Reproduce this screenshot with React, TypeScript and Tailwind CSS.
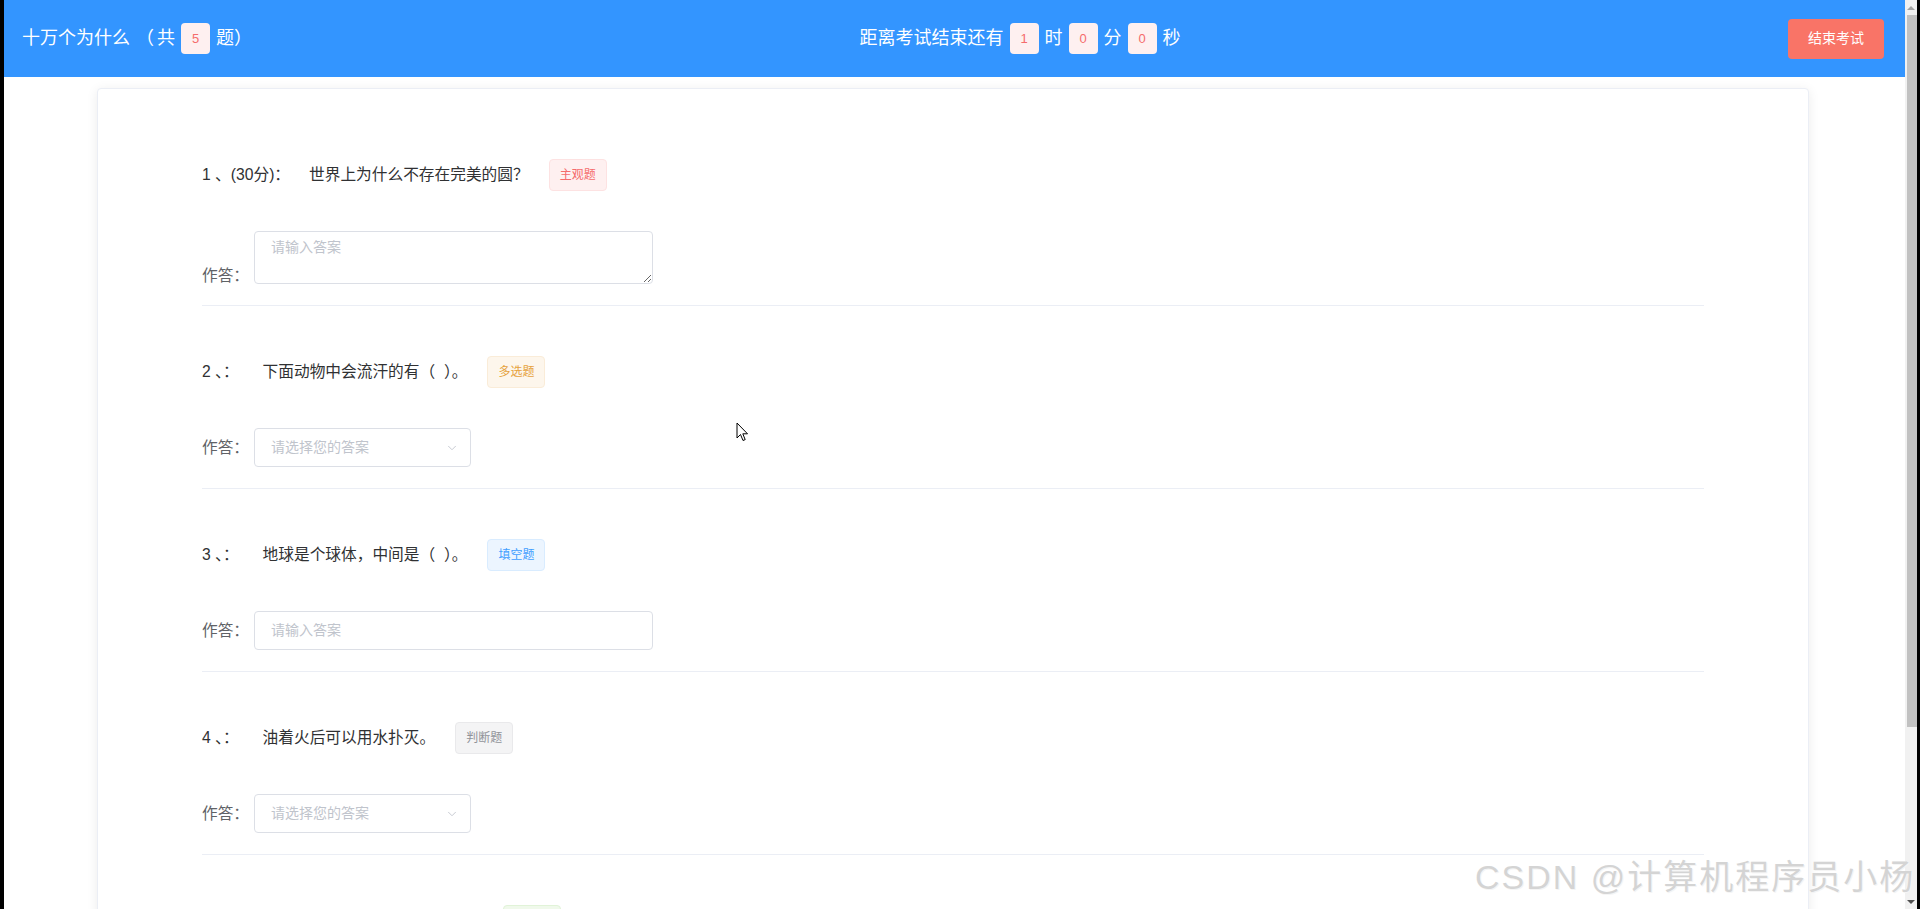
import React from "react";
import { ChevronDown } from "lucide-react";

type TagKind = "danger" | "warning" | "primary" | "info" | "success";

const tagClass: Record<TagKind, string> = {
  danger: "bg-[#fef0f0] border-[#fde2e2] text-[#f56c6c]",
  warning: "bg-[#fdf6ec] border-[#faecd8] text-[#e6a23c]",
  primary: "bg-[#ecf5ff] border-[#d9ecff] text-[#409eff]",
  info: "bg-[#f4f4f5] border-[#e9e9eb] text-[#909399]",
  success: "bg-[#f0f9eb] border-[#e1f3d8] text-[#67c23a]",
};

type Q = {
  no: string;
  text: string;
  tag: string;
  kind: TagKind;
  answer: "textarea" | "select" | "input";
  textGap: string;
};

const questions: Q[] = [
  { no: "1 、(30分)：", text: "世界上为什么不存在完美的圆？", tag: "主观题", kind: "danger", answer: "textarea", textGap: "ml-[19px]" },
  { no: "2 、：", text: "下面动物中会流汗的有（\u00a0\u00a0）。", tag: "多选题", kind: "warning", answer: "select", textGap: "ml-[24px]" },
  { no: "3 、：", text: "地球是个球体，中间是（\u00a0\u00a0）。", tag: "填空题", kind: "primary", answer: "input", textGap: "ml-[24px]" },
  { no: "4 、：", text: "油着火后可以用水扑灭。", tag: "判断题", kind: "info", answer: "select", textGap: "ml-[24px]" },
  { no: "5 、：", text: "一年中白天最长的一天是（\u00a0\u00a0）。", tag: "单选题", kind: "success", answer: "select", textGap: "ml-[24px]" },
];

function Badge({ children }: { children: React.ReactNode }) {
  return (
    <span className="mx-[6px] inline-flex h-[31px] w-[29px] items-center justify-center rounded-[4px] bg-[#fef0f0] text-[13px] text-[#f56c6c]">
      {children}
    </span>
  );
}

function Answer({ kind }: { kind: Q["answer"] }) {
  if (kind === "textarea") {
    return (
      <textarea
        placeholder="请输入答案"
        className="h-[53px] w-[399px] rounded-[4px] border border-[#dcdfe6] bg-white px-[16px] py-[5px] text-[14px] leading-[20px] text-[#606266] outline-none placeholder:text-[#c0c4cc]"
      />
    );
  }
  if (kind === "input") {
    return (
      <div className="flex h-[39px] w-[399px] items-center rounded-[4px] border border-[#dcdfe6] bg-white px-[16px] text-[14px] text-[#c0c4cc]">
        请输入答案
      </div>
    );
  }
  return (
    <div className="flex h-[39px] w-[217px] items-center justify-between rounded-[4px] border border-[#dcdfe6] bg-white pl-[16px] pr-[11px] text-[14px] text-[#c0c4cc]">
      <span>请选择您的答案</span>
      <ChevronDown size={14} strokeWidth={1.5} className="text-[#c0c4cc]" />
    </div>
  );
}

function Question({ q, first }: { q: Q; first: boolean }) {
  return (
    <div className={`${first ? "" : "pt-[50px]"} border-b border-[#ebeef5] pb-[21px]`}>
      <div className="flex h-[32px] items-center whitespace-nowrap text-[15.7px] text-[#303133]">
        <span>{q.no}</span>
        <span className={q.textGap}>{q.text}</span>
        <span
          className={`ml-[20px] inline-flex h-[32px] items-center rounded-[4px] border px-[10px] text-[12px] ${tagClass[q.kind]}`}
        >
          {q.tag}
        </span>
      </div>
      <div className={`mt-[40px] flex ${q.answer === "textarea" ? "items-end" : "items-center"}`}>
        <span
          className={`w-[52px] text-[15.7px] text-[#606266] ${q.answer === "textarea" ? "leading-[16px]" : ""}`}
        >
          作答：
        </span>
        <Answer kind={q.answer} />
      </div>
    </div>
  );
}

export default function App() {
  return (
    <div className="relative flex h-[909px] w-full overflow-hidden bg-white font-['Liberation_Sans','Noto_Sans_CJK_SC',sans-serif]">
      <div className="w-[4px] shrink-0 bg-black" />
      <div className="flex min-w-0 flex-1 flex-col">
        <header className="flex h-[77px] shrink-0 items-center justify-between bg-[#3395ff] pl-[18px] pr-[21px] text-white">
          <div className="flex items-center text-[18px]">
            <span>十万个为什么</span>
            <span className="ml-[6px]">（</span>
            <span className="ml-[3px]">共</span>
            <Badge>5</Badge>
            <span>题）</span>
          </div>
          <div className="flex items-center text-[18px]">
            <span>距离考试结束还有</span>
            <Badge>1</Badge>
            <span>时</span>
            <Badge>0</Badge>
            <span>分</span>
            <Badge>0</Badge>
            <span>秒</span>
          </div>
          <button className="h-[40px] w-[96px] rounded-[4px] bg-[#f97467] text-[14px] text-white">
            结束考试
          </button>
        </header>
        <div className="ml-[93px] mt-[11px] w-[1712px] flex-1 rounded-[4px] border border-[#ebeef5] bg-white px-[104px] pt-[70px] shadow-[0_2px_12px_0_rgba(0,0,0,0.08)]">
          {questions.map((q, i) => (
            <Question key={i} q={q} first={i === 0} />
          ))}
        </div>
      </div>
      <div className="flex w-[12px] shrink-0 flex-col bg-[#f1f1f1]">
        <div className="flex h-[15px] items-center justify-center">
          <div className="h-0 w-0 border-x-[4px] border-b-[4px] border-x-transparent border-b-[#a3a3a3]" />
        </div>
        <div className="ml-[2px] h-[712px] w-[10px] bg-[#c1c1c1]" />
        <div className="flex-1" />
        <div className="flex h-[15px] items-center justify-center">
          <div className="h-0 w-0 border-x-[4px] border-t-[4px] border-x-transparent border-t-[#505050]" />
        </div>
      </div>
      <div className="w-[3px] shrink-0 bg-black" />

      <div className="pointer-events-none absolute left-[1475px] top-[855px] whitespace-nowrap text-[34px] leading-[44px] tracking-[2px] text-[#d4d4d4] [text-shadow:0_0_1px_#ffffff,1px_1px_0_#f4f4f4]">
        CSDN @计算机程序员小杨
      </div>

      <svg
        className="pointer-events-none absolute left-[736px] top-[422px]"
        width="13"
        height="20"
        viewBox="0 0 13 20"
      >
        <path
          d="M1 1 L1 16 L4.5 12.5 L7 18.5 L9.2 17.6 L6.8 11.8 L11.5 11.8 Z"
          fill="#ffffff"
          stroke="#000000"
          strokeWidth="1"
          strokeLinejoin="round"
        />
      </svg>
    </div>
  );
}
